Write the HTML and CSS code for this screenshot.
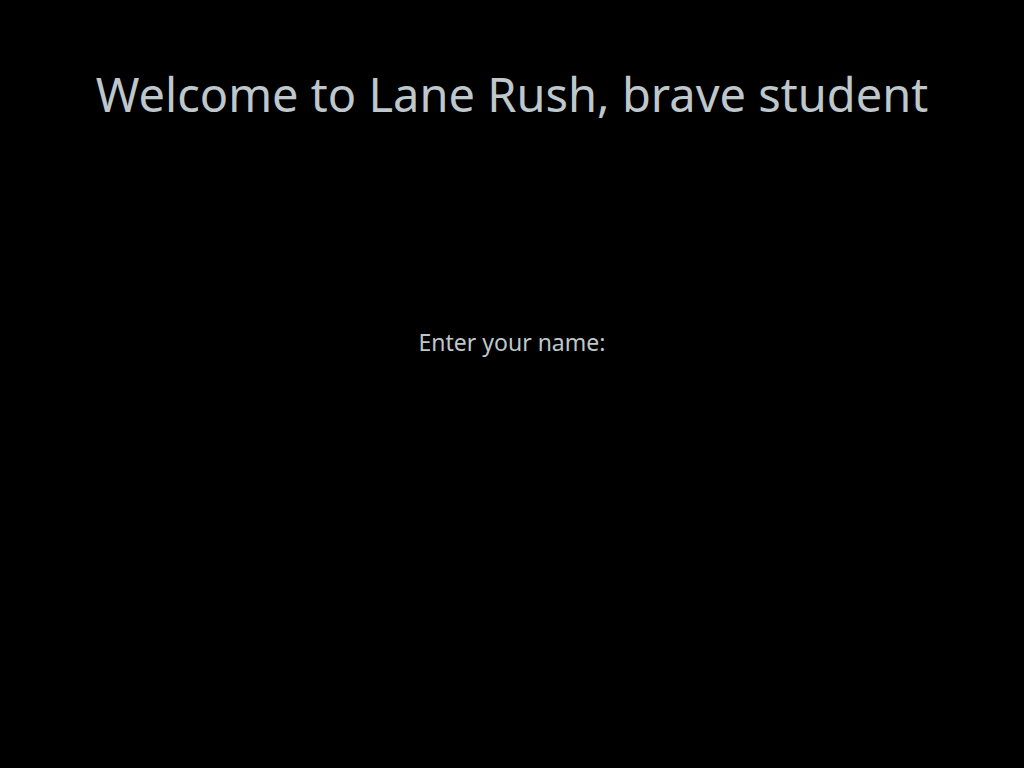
FILE: index.html
```html
<!DOCTYPE html>
<html>
<head>
<meta charset="utf-8">
<link rel="stylesheet" href="styles.css">
</head>
<body>
<main class="screen">
  <h1 class="title">Welcome to Lane Rush, brave student</h1>
  <p class="prompt">Enter your name:</p>
</main>
</body>
</html>
```
FILE: styles.css
```css
html, body {
  margin: 0;
  padding: 0;
  background: #000;
}
.screen {
  width: 1024px;
  height: 768px;
  display: flex;
  flex-direction: column;
  align-items: center;
  color: #bdc7cc;
  font-family: "Comic Sans MS", "Noto Sans", sans-serif;
}
.title {
  margin: 62px 0 0;
  font-size: 47px;
  font-weight: normal;
  line-height: 64px;
  white-space: nowrap;
}
.prompt {
  margin: 202px 0 0;
  font-size: 23px;
  line-height: 28px;
}
```
